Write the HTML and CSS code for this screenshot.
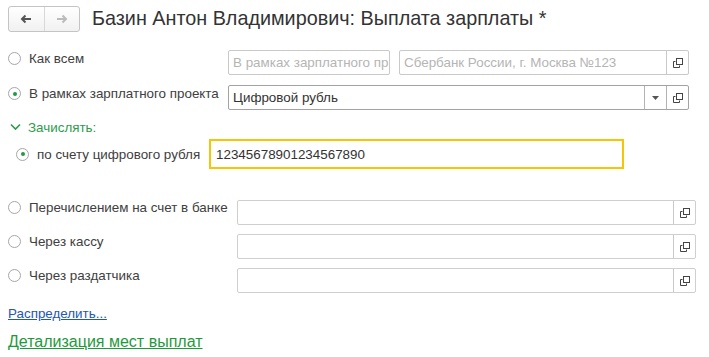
FILE: index.html
```html
<!DOCTYPE html>
<html lang="ru">
<head>
<meta charset="utf-8">
<title>Выплата зарплаты</title>
<link rel="stylesheet" href="styles.css">
</head>
<body>
<div class="page">
  <header class="header">
    <div class="nav">
      <button class="nav-btn back" type="button">
        <svg width="12" height="10" viewBox="0 0 12 10"><path d="M11 5H3M5.5 1.5L2 5l3.5 3.5" fill="none" stroke="#555" stroke-width="2"/></svg>
      </button>
      <button class="nav-btn fwd" type="button">
        <svg width="12" height="10" viewBox="0 0 12 10"><path d="M1 5h8M6.5 1.5L10 5 6.5 8.5" fill="none" stroke="#bbb" stroke-width="2"/></svg>
      </button>
    </div>
    <h1 class="title">Базин Антон Владимирович: Выплата зарплаты *</h1>
  </header>

  <div class="row row-top1">
    <label class="radio-label col-a"><span class="radio"></span>Как всем</label>
    <div class="field disabled w-short"><span class="ph">В рамках зарплатного пр</span></div>
    <div class="field disabled w-bank"><span class="ph">Сбербанк России, г. Москва №123</span><span class="fbtn"><svg class="open" width="10" height="10" viewBox="0 0 10 10"><rect x="3.5" y="0.5" width="6" height="6" fill="none" stroke="#444"/><path d="M2.5 3.5H0.5V9.5H6.5V7.5" fill="none" stroke="#444"/></svg></span></div>
  </div>

  <div class="row row-top2">
    <label class="radio-label col-a"><span class="radio on"></span>В рамках зарплатного проекта</label>
    <div class="field active w-proj"><span class="val">Цифровой рубль</span><span class="fbtn"><svg width="7" height="4" viewBox="0 0 7 4"><path d="M0 0h7L3.5 4z" fill="#555"/></svg></span><span class="fbtn"><svg class="open" width="10" height="10" viewBox="0 0 10 10"><rect x="3.5" y="0.5" width="6" height="6" fill="none" stroke="#444"/><path d="M2.5 3.5H0.5V9.5H6.5V7.5" fill="none" stroke="#444"/></svg></span></div>
  </div>

  <div class="group-head">
    <svg width="11" height="8" viewBox="0 0 11 8"><path d="M1 1.5l4.5 4.5 4.5-4.5" fill="none" stroke="#2e9b4e" stroke-width="1.6"/></svg>
    <span>Зачислять:</span>
  </div>

  <div class="row row-sub">
    <label class="radio-label col-sub"><span class="radio on"></span>по счету цифрового рубля</label>
    <div class="field focused"><span class="val">12345678901234567890</span></div>
  </div>

  <div class="row row-b first">
    <label class="radio-label col-b"><span class="radio"></span>Перечислением на счет в банке</label>
    <div class="field plain w-b"><span class="val"></span><span class="fbtn"><svg class="open" width="10" height="10" viewBox="0 0 10 10"><rect x="3.5" y="0.5" width="6" height="6" fill="none" stroke="#444"/><path d="M2.5 3.5H0.5V9.5H6.5V7.5" fill="none" stroke="#444"/></svg></span></div>
  </div>
  <div class="row row-b">
    <label class="radio-label col-b"><span class="radio"></span>Через кассу</label>
    <div class="field plain w-b"><span class="val"></span><span class="fbtn"><svg class="open" width="10" height="10" viewBox="0 0 10 10"><rect x="3.5" y="0.5" width="6" height="6" fill="none" stroke="#444"/><path d="M2.5 3.5H0.5V9.5H6.5V7.5" fill="none" stroke="#444"/></svg></span></div>
  </div>
  <div class="row row-b">
    <label class="radio-label col-b"><span class="radio"></span>Через раздатчика</label>
    <div class="field plain w-b"><span class="val"></span><span class="fbtn"><svg class="open" width="10" height="10" viewBox="0 0 10 10"><rect x="3.5" y="0.5" width="6" height="6" fill="none" stroke="#444"/><path d="M2.5 3.5H0.5V9.5H6.5V7.5" fill="none" stroke="#444"/></svg></span></div>
  </div>

  <a class="link-blue" href="#">Распределить...</a>
  <a class="link-green" href="#">Детализация мест выплат</a>
</div>
</body>
</html>
```

FILE: styles.css
```css
html, body {
  margin: 0;
  padding: 0;
  background: #fff;
}
body {
  font-family: "Liberation Sans", Arial, sans-serif;
  font-size: 13.4px;
  color: #404040;
}
.page {
  padding: 0 8px;
  display: flex;
  flex-direction: column;
}
.header {
  display: flex;
  align-items: center;
  gap: 12px;
  padding-top: 5px;
  height: 27px;
}
.nav {
  display: flex;
  width: 72px;
  height: 26px;
  box-sizing: border-box;
  border: 1px solid #c4c4c4;
  border-radius: 3px;
  background: linear-gradient(#ffffff, #f1f1f1);
  overflow: hidden;
  flex: none;
}
.nav-btn {
  flex: 1;
  border: 0;
  background: transparent;
  padding: 0;
  display: flex;
  align-items: center;
  justify-content: center;
}
.nav-btn.back {
  border-right: 1px solid #d8d8d8;
}
.title {
  margin: 0;
  font-weight: normal;
  font-size: 19.8px;
  color: #333;
  white-space: nowrap;
}
.row {
  display: flex;
  align-items: center;
}
.row-top1 { margin-top: 18px; }
.row-top2 { margin-top: 10px; }
.radio-label {
  display: flex;
  align-items: center;
  gap: 8px;
  white-space: nowrap;
  flex: none;
}
.col-a { width: 220px; margin-top: -8px; }
.col-sub { width: 193px; padding-left: 8px; box-sizing: border-box; }
.col-b { width: 229px; margin-top: -10px; }
.radio {
  width: 13px;
  height: 13px;
  box-sizing: border-box;
  border: 1px solid #a6a6a6;
  border-radius: 50%;
  background: #fff;
  display: inline-flex;
  align-items: center;
  justify-content: center;
  flex: none;
}
.radio.on::after {
  content: "";
  width: 4px;
  height: 4px;
  border-radius: 50%;
  background: #1f9a45;
}
.field {
  display: flex;
  align-items: stretch;
  height: 25px;
  box-sizing: border-box;
  border: 1px solid #c9c9c9;
  border-radius: 2px;
  background: #fff;
}
.field .ph, .field .val {
  flex: 1;
  display: flex;
  align-items: center;
  padding: 0 4px;
  overflow: hidden;
  white-space: nowrap;
  min-width: 0;
}
.ph { color: #b5b5b5; }
.val { color: #333; }
.fbtn {
  width: 21px;
  flex: none;
  border-left: 1px solid #c9c9c9;
  display: flex;
  align-items: center;
  justify-content: center;
}
.w-short { width: 162px; }
.w-bank { width: 290px; margin-left: 9px; }
.w-proj { width: 461px; }
.field.active { border-color: #a3a3a3; }
.field.active .fbtn { border-left-color: #b3b3b3; }
.group-head {
  display: flex;
  align-items: center;
  gap: 7px;
  margin-top: 10px;
  padding-left: 2px;
  height: 14px;
  color: #2e9b4e;
}
.row-sub { margin-top: 5px; }
.field.focused {
  width: 415px;
  height: 30px;
  border: 2px solid #f6c606;
  border-radius: 0;
  margin-left: 8px;
}
.field.focused .val { padding: 0 5px; }
.row-b { margin-top: 9px; }
.row-b.first { margin-top: 31px; }
.w-b { width: 459px; }
.field.plain { border-color: #cfcfcf; }
.link-blue {
  margin-top: 13px;
  color: #2456b5;
  align-self: flex-start;
}
.link-green {
  margin-top: 12px;
  font-size: 16px;
  color: #1e9a3c;
  align-self: flex-start;
}
```
